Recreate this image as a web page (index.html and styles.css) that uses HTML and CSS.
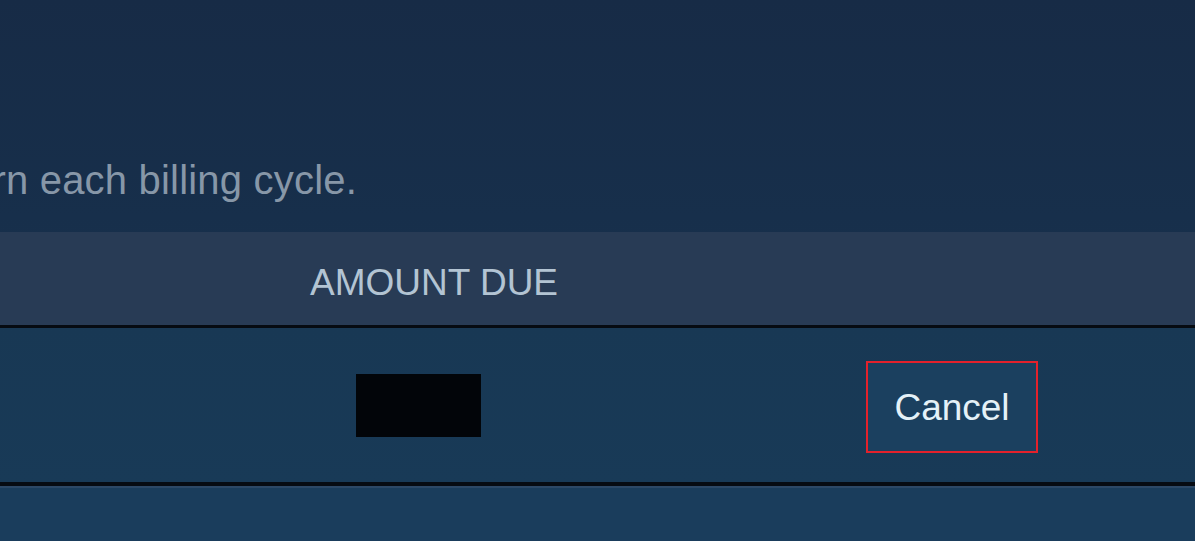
FILE: index.html
```html
<!DOCTYPE html>
<html lang="en">
    <head>
        <meta charset="UTF-8">
        <meta name="viewport" content="width=device-width, initial-scale=1.0">
        <title>Subscription</title>
        <link rel="stylesheet" href="styles.css">
    </head>
    <body>
        <main class="page">
            <section class="intro">
                <p class="note">Your subscription will return each billing cycle.</p>
            </section>
            <div class="tableHead">
                <span class="headCell">AMOUNT DUE</span>
            </div>
            <div class="tableRow">
                <div class="redacted"></div>
                <button class="cancelBtn">Cancel</button>
            </div>
            <div class="tableFoot"></div>
        </main>
    </body>
</html>
```

FILE: styles.css
```css
body {
    margin: 0;
    padding: 0;
    width: 1195px;
    height: 541px;
    overflow: hidden;
    background: linear-gradient(180deg, #172b46 0%, #172f4b 40%, #183553 100%);
    font-family: "Liberation Sans", Arial, sans-serif;
}

.page {
    display: flex;
    flex-direction: column;
}

.intro {
    height: 232px;
    box-sizing: border-box;
    padding-top: 156px;
    display: flex;
    justify-content: flex-end;
    width: 357px;
    overflow: hidden;
}

.note {
    margin: 0;
    white-space: nowrap;
    flex-shrink: 0;
    font-size: 40px;
    line-height: 48px;
    letter-spacing: 0.2px;
    color: #8797a8;
}

.tableHead {
    height: 96px;
    box-sizing: border-box;
    padding-top: 8px;
    padding-left: 310px;
    background-color: #283b55;
    border-bottom: 3px solid #060b12;
}

.headCell {
    display: block;
    font-size: 37px;
    line-height: 85px;
    color: #b3c4d3;
}

.tableRow {
    height: 154px;
    display: flex;
    align-items: center;
    padding-left: 356px;
    background: linear-gradient(180deg, #183854 0%, #183a57 100%);
    border-bottom: 4px solid #060b12;
}

.redacted {
    width: 125px;
    height: 63px;
    margin-top: 1px;
    background-color: #020509;
}

.cancelBtn {
    margin-left: 385px;
    margin-top: 4px;
    width: 172px;
    height: 92px;
    box-sizing: border-box;
    border: 2px solid #e4212b;
    background-color: #1b405f;
    color: #e4f1f8;
    font-family: "Liberation Sans", Arial, sans-serif;
    font-size: 37px;
    padding: 2px 0 0 0;
}

.tableFoot {
    height: 60px;
    border-top: 2px solid #2c4866;
    background-color: #1a3d5c;
}
```
